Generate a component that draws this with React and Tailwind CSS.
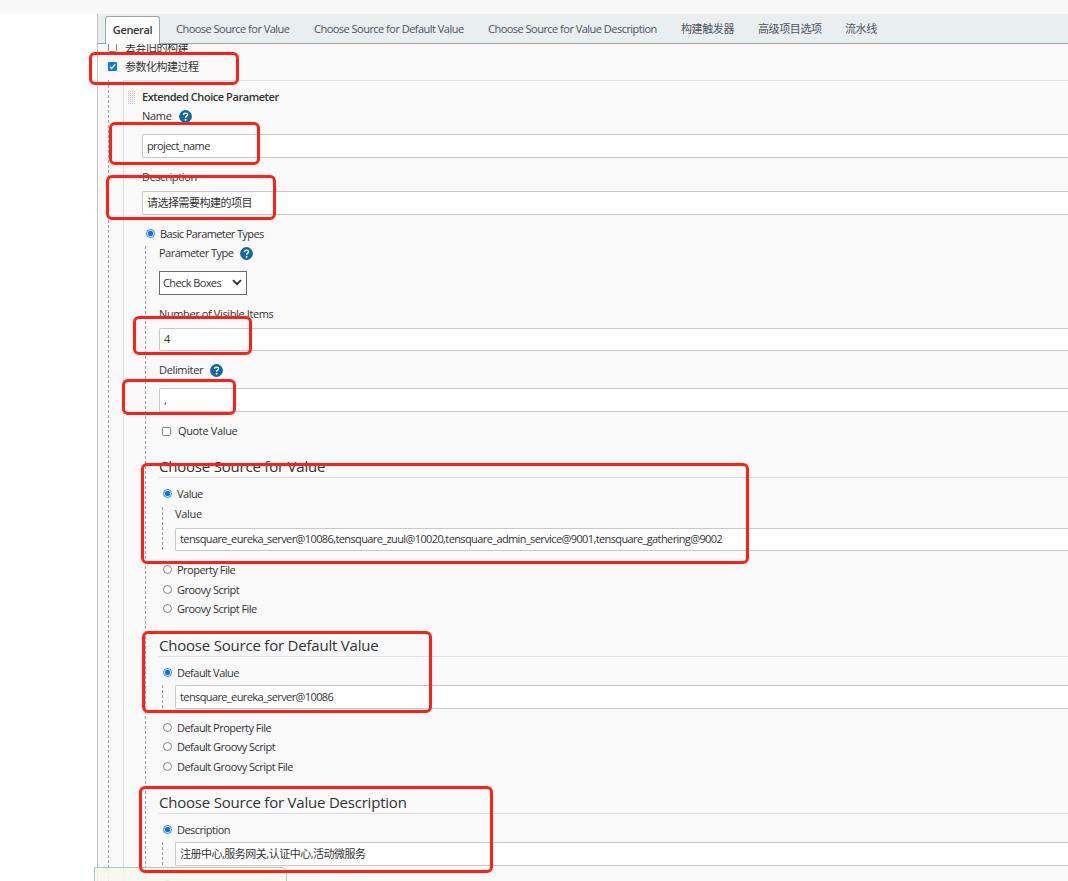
import React from "react";

function Radio({ on }) {
  return (
    <svg width="9" height="9" viewBox="0 0 9 9" className="shrink-0">
      <circle cx="4.5" cy="4.5" r="4" fill="#fff" stroke={on ? "#1a73e8" : "#767676"} strokeWidth="0.9" />
      {on && <circle cx="4.5" cy="4.5" r="2.7" fill="#0b74f5" />}
    </svg>
  );
}

function Check({ on, className = "" }) {
  return (
    <svg width="9" height="9" viewBox="0 0 9 9" className={`shrink-0 ${className}`}>
      {on ? (
        <>
          <rect width="9" height="9" rx="1.2" fill="#0b74f5" />
          <path d="M2 4.7 3.7 6.5 7.2 2.4" fill="none" stroke="#fff" strokeWidth="1.4" />
        </>
      ) : (
        <rect x="0.5" y="0.5" width="8" height="8" rx="1" fill="#fff" stroke="#808080" />
      )}
    </svg>
  );
}

function Help() {
  return (
    <svg width="13" height="13" viewBox="0 0 13 13" className="mt-[2px] shrink-0">
      <circle cx="6.5" cy="6.5" r="6.4" fill="#10699f" />
      <path d="M4.5 5c0-1.2.8-1.9 2-1.9s2 .7 2 1.7c0 1.3-1.9 1.4-1.9 2.9" fill="none" stroke="#fff" strokeWidth="1.4" />
      <circle cx="6.6" cy="9.8" r=".95" fill="#fff" />
    </svg>
  );
}

function Grip() {
  const dots = [];
  for (let y = 0; y < 7; y++) for (let x = 0; x < 4; x++) dots.push([x * 2, y * 2]);
  return (
    <svg width="8" height="14" viewBox="0 0 8 14" className="mt-[3px] shrink-0">
      {dots.map(([x, y]) => (
        <rect key={`${x}-${y}`} x={x} y={y} width="1" height="1" fill="#bdbdbd" />
      ))}
    </svg>
  );
}

function Input({ className, textClass = "tracking-[-0.61px]", children }) {
  return (
    <div className={`flex items-center rounded-l-[2px] border border-r-0 border-[#c8c8c8] bg-white pl-1 ${className}`}>
      <span className={textClass}>{children}</span>
    </div>
  );
}

function Heading({ className, children }) {
  return (
    <div className={`flex h-[22px] items-center border-b border-[#dedede] text-[15px] tracking-[-0.21px] ${className}`}>
      {children}
    </div>
  );
}

function Option({ on, className, children }) {
  return (
    <div className={`flex items-center gap-[5px] ${className}`}>
      <Radio on={on} />
      <span>{children}</span>
    </div>
  );
}

function Dashed({ className, children }) {
  return (
    <div className={`flex ${className}`}>
      <div className="w-px shrink-0 bg-[repeating-linear-gradient(to_bottom,#a0a0a0_0px,#a0a0a0_3px,transparent_3px,transparent_5px)]" />
      <div className="min-w-0 flex-1 pl-3">{children}</div>
    </div>
  );
}

const marks = [
  "left-[89px] top-[52px] h-[33px] w-[150px]",
  "left-[109px] top-[122px] h-[43px] w-[151px]",
  "left-[106px] top-[175px] h-[45px] w-[170px]",
  "left-[133px] top-[316px] h-[39px] w-[119px]",
  "left-[122px] top-[379px] h-[36px] w-[114px]",
  "left-[141px] top-[463px] h-[101px] w-[608px]",
  "left-[142px] top-[631px] h-[82px] w-[290px]",
  "left-[139px] top-[786px] h-[87px] w-[354px]",
];

export default function App() {
  return (
    <div className="relative flex h-[881px] w-[1068px] flex-col overflow-hidden bg-white font-['Open_Sans','Noto_Sans_CJK_SC',sans-serif] text-[11px] leading-none tracking-[-0.52px] whitespace-nowrap text-[#333]">
      <div className="h-[14px] shrink-0 bg-[#f8f8f8]" />
      <div className="ml-[97px] flex min-h-0 flex-1 flex-col border-l border-[#c4c4c4] bg-[#f9f9f9]">
        <nav className="flex h-[30px] shrink-0 border-b border-[#98a8a8] bg-[#e9eef1] pl-[7px] text-[#4d545d]">
          <div className="z-10 mt-[2px] flex h-[28px] w-[55px] items-center justify-center rounded-t-[3px] border border-b-0 border-[#98a8a8] bg-white pb-[3px] font-semibold tracking-[-0.35px] text-[#333]">
            General
          </div>
          <div className="flex items-center pl-4">
            <span className="w-[138px]">Choose Source for Value</span>
            <span className="w-[174px]">Choose Source for Default Value</span>
            <span className="w-[193px]">Choose Source for Value Description</span>
            <span className="w-[77px] tracking-[-0.4px]">构建触发器</span>
            <span className="w-[87px] tracking-[-0.4px]">高级项目选项</span>
            <span className="tracking-[-0.4px]">流水线</span>
          </div>
        </nav>

        <div className="flex h-[13px] shrink-0 items-end overflow-hidden pl-[10px]">
          <div className="flex h-[19px] shrink-0 items-center gap-2">
            <Check />
            <span className="tracking-[-0.5px]">丢弃旧的构建</span>
          </div>
        </div>
        <div className="flex h-5 shrink-0 items-center gap-2 pb-px pl-[10px]">
          <Check on />
          <span className="tracking-[-0.5px]">参数化构建过程</span>
        </div>

        <div className="mt-[3px] ml-[10px] flex min-h-0 flex-1">
          <div className="w-px shrink-0 bg-[repeating-linear-gradient(to_bottom,#a0a0a0_0px,#a0a0a0_3px,transparent_3px,transparent_5px)]" />
          <div className="ml-[14px] min-w-0 flex-1 border-t border-l border-[#dedede] pt-2 pl-[4px]">
            <div className="flex h-4 items-center gap-[6px] pb-px font-semibold tracking-[-0.44px]">
              <Grip />
              <span>Extended Choice Parameter</span>
            </div>
            <div className="pl-[14px]">
              <div className="flex h-[22px] items-center gap-[7px] pb-px">
                <span className="tracking-[-0.3px]">Name</span>
                <Help />
              </div>
              <Input className="mt-[7px] h-6 pb-px">project_name</Input>
              <div className="mt-2 flex h-[22px] items-center pb-px tracking-[-0.35px]">Description</div>
              <Input className="mt-[3px] h-6 pb-px" textClass="tracking-[-0.5px]">请选择需要构建的项目</Input>
              <Option on className="mt-[9px] h-5 pb-px pl-1 tracking-[-0.6px]">Basic Parameter Types</Option>

              <Dashed className="mt-[2px] ml-[3px] h-[640px]">
                <div className="pl-px">
                  <div className="flex h-[14px] items-center gap-[7px] pb-px">
                    <span>Parameter Type</span>
                    <Help />
                  </div>
                  <div className="mt-[11px] flex h-6 w-[88px] items-center justify-between border border-[#6b6b6b] bg-white pr-1 pb-px pl-[3px]">
                    <span className="tracking-[-0.6px]">Check Boxes</span>
                    <svg width="10" height="7" viewBox="0 0 10 7">
                      <path d="M1 1.2 5 5.2 9 1.2" fill="none" stroke="#333" strokeWidth="1.9" />
                    </svg>
                  </div>
                  <div className="mt-3 flex h-[14px] items-center pb-px tracking-[-0.38px]">Number of Visible Items</div>
                  <Input className="mt-[7px] h-[23px] pb-[2px]">4</Input>
                  <div className="mt-3 flex h-[14px] items-center gap-[7px] pb-px">
                    <span className="tracking-[-0.35px]">Delimiter</span>
                    <Help />
                  </div>
                  <Input className="mt-[11px] h-6 pb-px">,</Input>
                  <div className="mt-3 flex h-[14px] items-center gap-[7px] pb-px pl-[3px]">
                    <Check className="mt-[2px]" />
                    <span className="tracking-[-0.35px]">Quote Value</span>
                  </div>

                  <Heading className="mt-[18px]">Choose Source for Value</Heading>
                  <Option on className="mt-[6px] h-5 pb-px pl-1">Value</Option>
                  <Dashed className="mt-[3px] ml-[3px]">
                    <div className="flex h-[14px] items-center pb-px tracking-[-0.3px]">Value</div>
                    <Input className="mt-[7px] h-[23px] pb-[2px]">
                      tensquare_eureka_server@10086,tensquare_zuul@10020,tensquare_admin_service@9001,tensquare_gathering@9002
                    </Input>
                  </Dashed>
                  <Option className="mt-[9px] h-5 pb-px pl-1">Property File</Option>
                  <Option className="h-5 pb-px pl-1">Groovy Script</Option>
                  <Option className="h-[19px] pb-[2px] pl-1">Groovy Script File</Option>

                  <Heading className="mt-4 pb-px">Choose Source for Default Value</Heading>
                  <Option on className="mt-[6px] h-5 pb-px pl-1">Default Value</Option>
                  <Dashed className="mt-[2px] ml-[3px]">
                    <Input className="h-6 pb-px">tensquare_eureka_server@10086</Input>
                  </Dashed>
                  <Option className="mt-[9px] h-5 pb-px pl-1">Default Property File</Option>
                  <Option className="h-[19px] pb-[2px] pl-1">Default Groovy Script</Option>
                  <Option className="h-5 pb-px pl-1">Default Groovy Script File</Option>

                  <Heading className="mt-[15px]">Choose Source for Value Description</Heading>
                  <Option on className="mt-[6px] h-5 pb-px pl-1">Description</Option>
                  <Dashed className="mt-[2px] ml-[3px]">
                    <Input className="h-6 pb-px" textClass="tracking-[-0.5px]">注册中心,服务网关,认证中心,活动微服务</Input>
                  </Dashed>
                  <div className="mt-[14px] pl-1">
                    <Radio />
                  </div>
                </div>
              </Dashed>
            </div>
          </div>
        </div>
      </div>

      <div className="absolute top-[867px] left-[94px] h-[20px] w-[193px] rounded-tr-[5px] border border-[#a8ccba] bg-[#f7f9ee]/85" />
      {marks.map((m) => (
        <div key={m} className={`absolute rounded-[6px] border-3 border-[#ff2013] ${m}`} />
      ))}
    </div>
  );
}
